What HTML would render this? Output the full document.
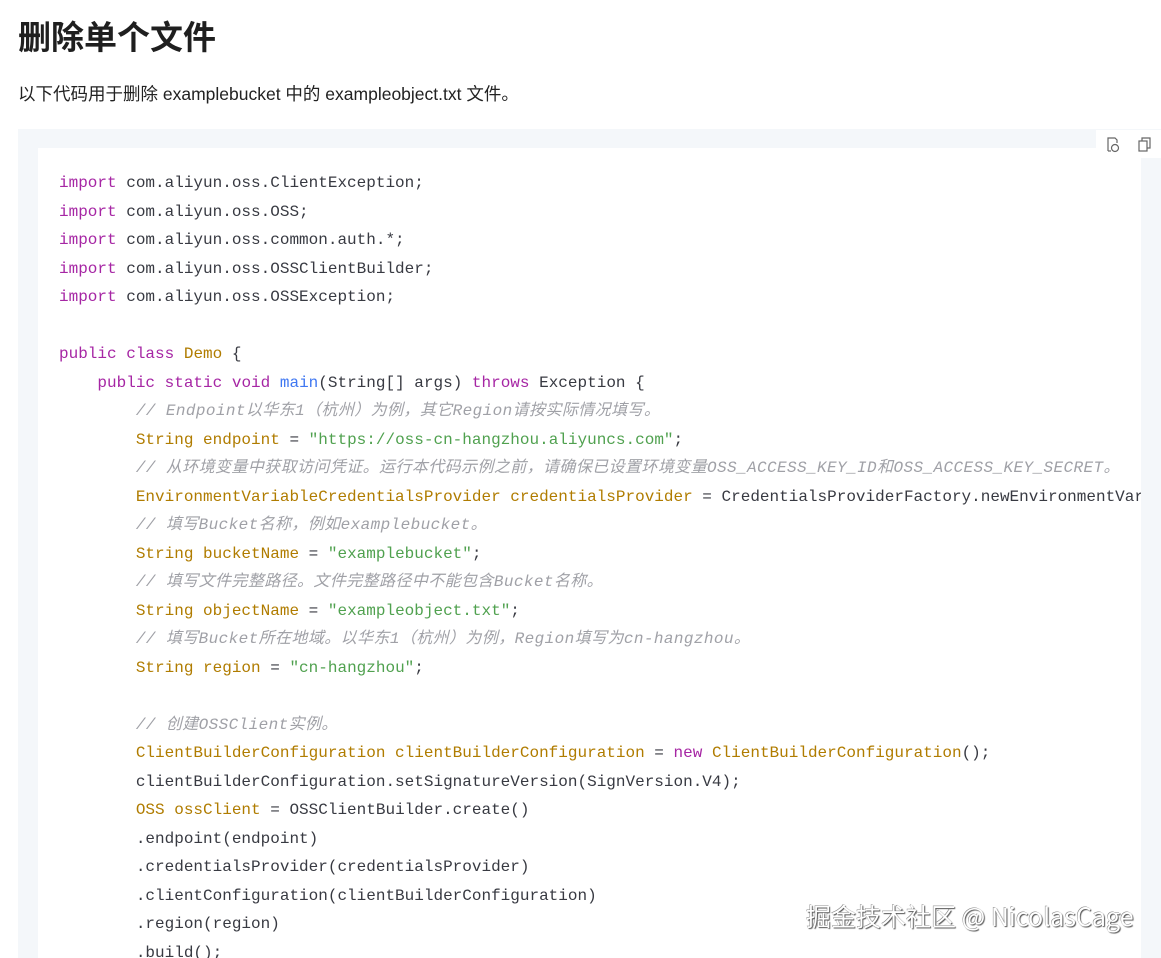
<!DOCTYPE html>
<html><head><meta charset="utf-8"><style>
body{margin:0;width:1161px;height:958px;overflow:hidden;background:#fff;font-family:"Liberation Sans","Noto Sans CJK SC",sans-serif;position:relative}
h1{position:absolute;left:18px;top:16px;margin:0;font-size:33px;font-weight:bold;color:#1f1f1f;line-height:44px}
p{position:absolute;left:18px;top:82px;margin:0;font-size:17.5px;color:#222;line-height:24px}
.outer{position:absolute;left:18px;top:129px;width:1143px;height:829px;background:#f4f7fa}
.inner{position:absolute;left:38px;top:148px;width:1103px;height:810px;background:#fff;overflow:hidden}
.tb{position:absolute;left:1096px;top:130px;width:65px;height:28px;background:#fff}
pre{margin:0;position:absolute;left:21px;top:21px;font-family:"Liberation Mono","Noto Sans CJK SC",monospace;font-size:16px;line-height:28.5px;color:#383a42;white-space:pre}
.k{color:#a626a4}.t{color:#b07c00}.f{color:#4078f2}.s{color:#50a14f}.c{color:#a0a1a7;font-style:italic;letter-spacing:0.4px}
.wm{position:absolute;left:806px;top:899px;font-size:25px;color:#fff;font-family:"Noto Sans CJK SC",sans-serif;text-shadow:1px 1px 1px #555,-0.5px -0.5px 0 #888;line-height:34px}
</style></head><body>
<h1>删除单个文件</h1>
<p>以下代码用于删除 examplebucket 中的 exampleobject.txt 文件。</p>
<div class="outer"></div>
<div class="inner"><pre><span class="k">import</span> com.aliyun.oss.ClientException;
<span class="k">import</span> com.aliyun.oss.OSS;
<span class="k">import</span> com.aliyun.oss.common.auth.*;
<span class="k">import</span> com.aliyun.oss.OSSClientBuilder;
<span class="k">import</span> com.aliyun.oss.OSSException;

<span class="k">public</span> <span class="k">class</span> <span class="t">Demo</span> {
    <span class="k">public</span> <span class="k">static</span> <span class="k">void</span> <span class="f">main</span>(String[] args) <span class="k">throws</span> Exception {
        <span class="c">// Endpoint以华东1（杭州）为例，其它Region请按实际情况填写。</span>
        <span class="t">String endpoint</span> = <span class="s">"https://oss-cn-hangzhou.aliyuncs.com"</span>;
        <span class="c">// 从环境变量中获取访问凭证。运行本代码示例之前，请确保已设置环境变量OSS_ACCESS_KEY_ID和OSS_ACCESS_KEY_SECRET。</span>
        <span class="t">EnvironmentVariableCredentialsProvider credentialsProvider</span> = CredentialsProviderFactory.newEnvironmentVariableCredentialsProvider();
        <span class="c">// 填写Bucket名称，例如examplebucket。</span>
        <span class="t">String bucketName</span> = <span class="s">"examplebucket"</span>;
        <span class="c">// 填写文件完整路径。文件完整路径中不能包含Bucket名称。</span>
        <span class="t">String objectName</span> = <span class="s">"exampleobject.txt"</span>;
        <span class="c">// 填写Bucket所在地域。以华东1（杭州）为例，Region填写为cn-hangzhou。</span>
        <span class="t">String region</span> = <span class="s">"cn-hangzhou"</span>;

        <span class="c">// 创建OSSClient实例。</span>
        <span class="t">ClientBuilderConfiguration clientBuilderConfiguration</span> = <span class="k">new</span> <span class="t">ClientBuilderConfiguration</span>();
        clientBuilderConfiguration.setSignatureVersion(SignVersion.V4);
        <span class="t">OSS ossClient</span> = OSSClientBuilder.create()
        .endpoint(endpoint)
        .credentialsProvider(credentialsProvider)
        .clientConfiguration(clientBuilderConfiguration)
        .region(region)
        .build();</pre></div>
<div class="tb">
<svg width="65" height="28" viewBox="0 0 65 28" fill="none" stroke="#666" stroke-width="1.2">
<path d="M12 21V8h7l2 2v3"/><path d="M12 21h3"/><circle cx="19" cy="18" r="3.5"/>
<rect x="43" y="11" width="8" height="10"/><path d="M46 11V8h8v10h-3"/>
</svg></div>
<div class="wm">掘金技术社区 @ NicolasCage</div>
</body></html>
